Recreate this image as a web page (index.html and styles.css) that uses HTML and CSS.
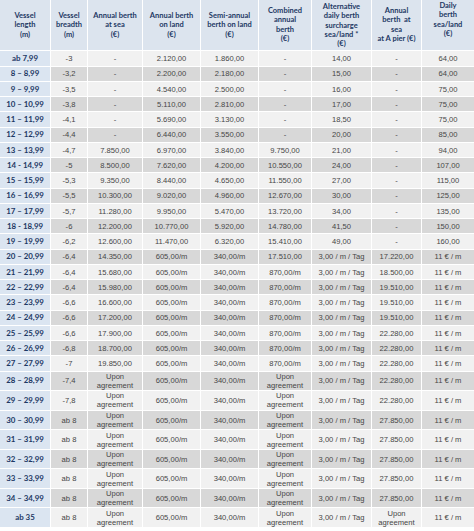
FILE: index.html
```html
<!DOCTYPE html>
<html lang="en">
<head>
<meta charset="utf-8">
<title>Berth prices</title>
<link rel="stylesheet" href="styles.css">
</head>
<body>
<table class="berth">
  <colgroup>
    <col class="c1"><col class="c2"><col class="c3"><col class="c4"><col class="c5"><col class="c6"><col class="c7"><col class="c8"><col class="c9">
  </colgroup>
  <thead>
    <tr class="head">
      <th class="h3">Vessel<br>length<br>(m)</th>
      <th class="h3">Vessel<br>breadth<br>(m)</th>
      <th class="h3">Annual berth<br>at sea<br>(€)</th>
      <th class="h3">Annual berth<br>on land<br>(€)</th>
      <th class="h3">Semi-annual<br>berth on land<br>(€)</th>
      <th class="h4">Combined<br>annual<br>berth<br>(€)</th>
      <th class="h5">Alternative<br>daily berth<br>surcharge<br>sea/land *<br>(€)</th>
      <th class="h4">Annual<br>berth &nbsp;at<br>sea<br>at A pier (€)</th>
      <th class="h1">Daily<br>berth<br>sea/land<br>(€)</th>
    </tr>
  </thead>
  <tbody>
    <tr class="s"><th>ab 7,99</th><td>-3</td><td>-</td><td>2.120,00</td><td>1.860,00</td><td>-</td><td>14,00</td><td>-</td><td>64,00</td></tr>
    <tr class="s"><th>8 – 8,99</th><td>-3,2</td><td>-</td><td>2.200,00</td><td>2.180,00</td><td>-</td><td>15,00</td><td>-</td><td>64,00</td></tr>
    <tr class="s"><th>9 – 9,99</th><td>-3,5</td><td>-</td><td>4.540,00</td><td>2.500,00</td><td>-</td><td>16,00</td><td>-</td><td>75,00</td></tr>
    <tr class="s"><th>10 – 10,99</th><td>-3,8</td><td>-</td><td>5.110,00</td><td>2.810,00</td><td>-</td><td>17,00</td><td>-</td><td>75,00</td></tr>
    <tr class="s"><th>11 – 11,99</th><td>-4,1</td><td>-</td><td>5.690,00</td><td>3.130,00</td><td>-</td><td>18,50</td><td>-</td><td>75,00</td></tr>
    <tr class="s"><th>12 – 12,99</th><td>-4,4</td><td>-</td><td>6.440,00</td><td>3.550,00</td><td>-</td><td>20,00</td><td>-</td><td>85,00</td></tr>
    <tr class="s"><th>13 – 13,99</th><td>-4,7</td><td>7.850,00</td><td>6.970,00</td><td>3.840,00</td><td>9.750,00</td><td>21,00</td><td>-</td><td>94,00</td></tr>
    <tr class="s"><th>14 - 14,99</th><td>-5</td><td>8.500,00</td><td>7.620,00</td><td>4.200,00</td><td>10.550,00</td><td>24,00</td><td>-</td><td>107,00</td></tr>
    <tr class="s"><th>15 – 15,99</th><td>-5,3</td><td>9.350,00</td><td>8.440,00</td><td>4.650,00</td><td>11.550,00</td><td>27,00</td><td>-</td><td>115,00</td></tr>
    <tr class="s"><th>16 – 16,99</th><td>-5,5</td><td>10.300,00</td><td>9.020,00</td><td>4.960,00</td><td>12.670,00</td><td>30,00</td><td>-</td><td>125,00</td></tr>
    <tr class="s"><th>17 – 17,99</th><td>-5,7</td><td>11.280,00</td><td>9.950,00</td><td>5.470,00</td><td>13.720,00</td><td>34,00</td><td>-</td><td>135,00</td></tr>
    <tr class="s"><th>18 - 18,99</th><td>-6</td><td>12.200,00</td><td>10.770,00</td><td>5.920,00</td><td>14.780,00</td><td>41,50</td><td>-</td><td>150,00</td></tr>
    <tr class="s"><th>19 – 19,99</th><td>-6,2</td><td>12.600,00</td><td>11.470,00</td><td>6.320,00</td><td>15.410,00</td><td>49,00</td><td>-</td><td>160,00</td></tr>
    <tr class="s"><th>20 – 20,99</th><td>-6,4</td><td>14.350,00</td><td>605,00/m</td><td>340,00/m</td><td>17.510,00</td><td>3,00 / m / Tag</td><td>17.220,00</td><td>11 € / m</td></tr>
    <tr class="s"><th>21 – 21,99</th><td>-6,4</td><td>15.680,00</td><td>605,00/m</td><td>340,00/m</td><td>870,00/m</td><td>3,00 / m / Tag</td><td>18.500,00</td><td>11 € / m</td></tr>
    <tr class="s"><th>22 – 22,99</th><td>-6,4</td><td>15.980,00</td><td>605,00/m</td><td>340,00/m</td><td>870,00/m</td><td>3,00 / m / Tag</td><td>19.510,00</td><td>11 € / m</td></tr>
    <tr class="s"><th>23 – 23,99</th><td>-6,6</td><td>16.600,00</td><td>605,00/m</td><td>340,00/m</td><td>870,00/m</td><td>3,00 / m / Tag</td><td>19.510,00</td><td>11 € / m</td></tr>
    <tr class="s"><th>24 – 24,99</th><td>-6,6</td><td>17.200,00</td><td>605,00/m</td><td>340,00/m</td><td>870,00/m</td><td>3,00 / m / Tag</td><td>19.510,00</td><td>11 € / m</td></tr>
    <tr class="s"><th>25 – 25,99</th><td>-6,6</td><td>17.900,00</td><td>605,00/m</td><td>340,00/m</td><td>870,00/m</td><td>3,00 / m / Tag</td><td>22.280,00</td><td>11 € / m</td></tr>
    <tr class="s"><th>26 – 26,99</th><td>-6,8</td><td>18.700,00</td><td>605,00/m</td><td>340,00/m</td><td>870,00/m</td><td>3,00 / m / Tag</td><td>22.280,00</td><td>11 € / m</td></tr>
    <tr class="s"><th>27 – 27,99</th><td>-7</td><td>19.850,00</td><td>605,00/m</td><td>340,00/m</td><td>870,00/m</td><td>3,00 / m / Tag</td><td>22.280,00</td><td>11 € / m</td></tr>
    <tr class="d"><th>28 – 28,99</th><td>-7,4</td><td>Upon<br>agreement</td><td>605,00/m</td><td>340,00/m</td><td>Upon<br>agreement</td><td>3,00 / m / Tag</td><td>22.280,00</td><td>11 € / m</td></tr>
    <tr class="d"><th>29 – 29,99</th><td>-7,8</td><td>Upon<br>agreement</td><td>605,00/m</td><td>340,00/m</td><td>Upon<br>agreement</td><td>3,00 / m / Tag</td><td>22.280,00</td><td>11 € / m</td></tr>
    <tr class="d"><th>30 – 30,99</th><td>ab 8</td><td>Upon<br>agreement</td><td>605,00/m</td><td>340,00/m</td><td>Upon<br>agreement</td><td>3,00 / m / Tag</td><td>27.850,00</td><td>11 € / m</td></tr>
    <tr class="d"><th>31 – 31,99</th><td>ab 8</td><td>Upon<br>agreement</td><td>605,00/m</td><td>340,00/m</td><td>Upon<br>agreement</td><td>3,00 / m / Tag</td><td>27.850,00</td><td>11 € / m</td></tr>
    <tr class="d"><th>32 – 32,99</th><td>ab 8</td><td>Upon<br>agreement</td><td>605,00/m</td><td>340,00/m</td><td>Upon<br>agreement</td><td>3,00 / m / Tag</td><td>27.850,00</td><td>11 € / m</td></tr>
    <tr class="d"><th>33 – 33,99</th><td>ab 8</td><td>Upon<br>agreement</td><td>605,00/m</td><td>340,00/m</td><td>Upon<br>agreement</td><td>3,00 / m / Tag</td><td>27.850,00</td><td>11 € / m</td></tr>
    <tr class="d"><th>34 – 34,99</th><td>ab 8</td><td>Upon<br>agreement</td><td>605,00/m</td><td>340,00/m</td><td>Upon<br>agreement</td><td>3,00 / m / Tag</td><td>27.850,00</td><td>11 € / m</td></tr>
    <tr class="d"><th>ab 35</th><td>ab 8</td><td>Upon<br>agreement</td><td>605,00/m</td><td>340,00/m</td><td>Upon<br>agreement</td><td>3,00 / m / Tag</td><td>Upon<br>agreement</td><td>11 € / m</td></tr>
  </tbody>
</table>
</body>
</html>
```
FILE: styles.css
```css
html, body {
  margin: 0;
  padding: 0;
  background: #ffffff;
}

.berth {
  width: 474px;
  border-collapse: separate;
  border-spacing: 0;
  table-layout: fixed;
  font-family: "Liberation Sans", Arial, sans-serif;
  font-size: 7.6px;
  color: #464646;
}

.c1 { width: 51px; }
.c2 { width: 37px; }
.c3 { width: 55px; }
.c4 { width: 58px; }
.c5 { width: 58px; }
.c6 { width: 53px; }
.c7 { width: 60px; }
.c8 { width: 50px; }
.c9 { width: 52px; }

.berth th,
.berth td {
  padding: 0;
  border-right: 1px solid #ffffff;
  border-bottom: 1px solid #ffffff;
  text-align: center;
  vertical-align: middle;
  box-sizing: border-box;
}

.berth th:last-child,
.berth td:last-child {
  border-right: 0;
}

.head th {
  height: 51.4px;
  background: #dce4ee;
  color: #1d3864;
  font-family: Lato, "Liberation Sans", sans-serif;
  font-weight: 700;
  font-size: 7.5px;
  line-height: 9.3px;
  vertical-align: top;
}

.head th.h3 { padding-top: 11px; }
.head th.h4 { padding-top: 6px; }
.head th.h5 { padding-top: 2px; }
.head th.h1 { padding-top: 1px; }

.berth tbody th {
  background: #dbe5f1;
  color: #1d3864;
  font-family: Lato, "Liberation Sans", sans-serif;
  font-weight: 700;
  font-size: 7.9px;
}

.berth tbody td {
  background: #f1f1f1;
}

.berth tbody tr:nth-child(even) td {
  background: #d8d8d8;
}

.s th,
.s td {
  height: 15.25px;
  line-height: 9px;
}

.d th,
.d td {
  height: 19.55px;
  line-height: 9px;
}
```
